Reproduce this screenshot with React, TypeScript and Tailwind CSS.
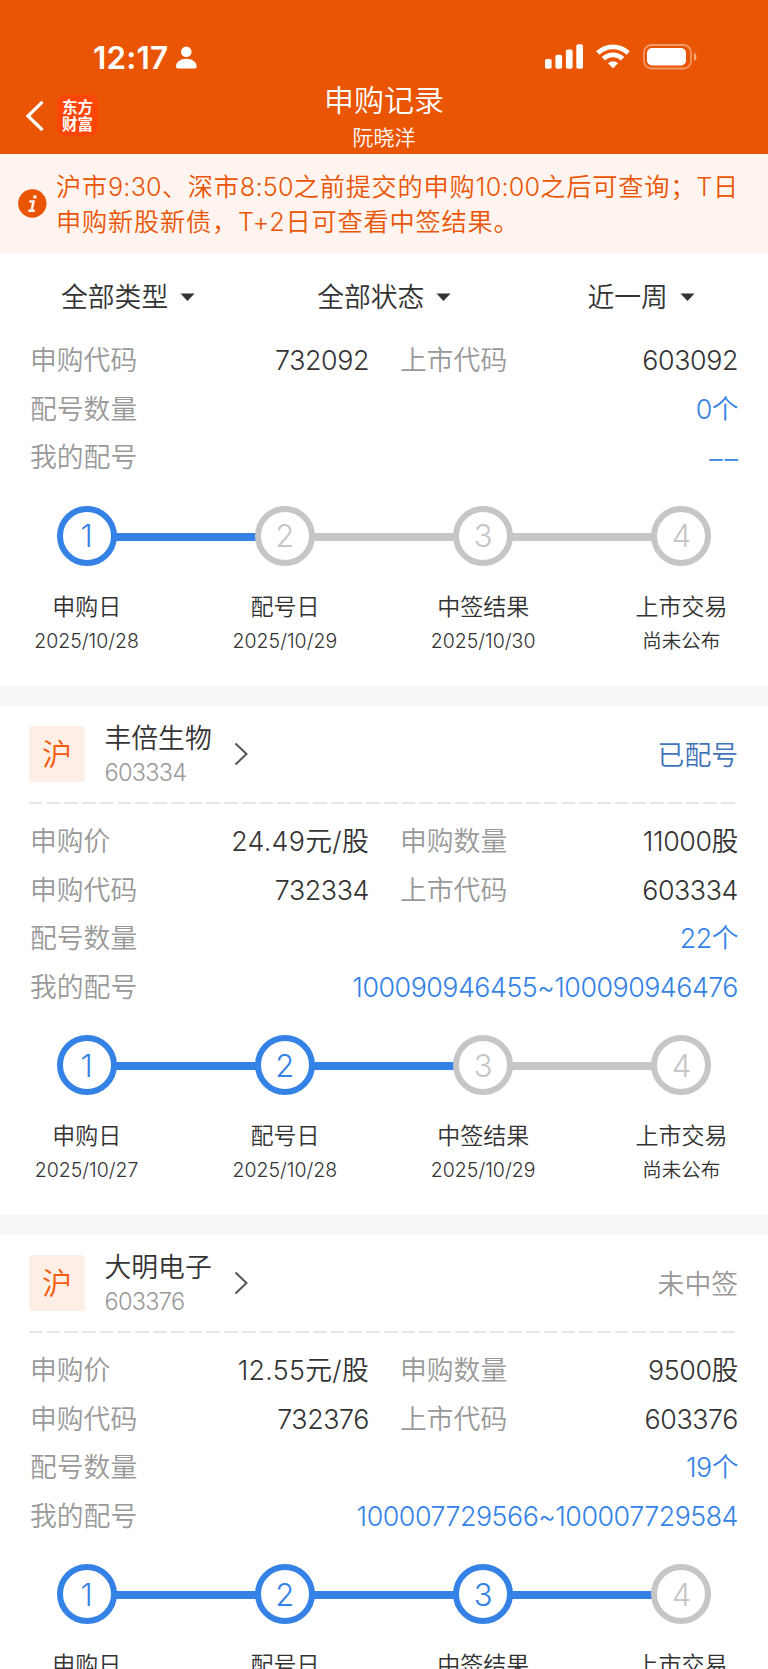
import type { ReactNode } from 'react'
import clsx from 'clsx'

type Step = { label: string; date: string }

type Field = { label: string; value: string }

type Subscription = {
  name?: string
  code?: string
  status?: string
  statusClass?: string
  pairs: Field[][]
  count: string
  numbers?: string
  done: number
  steps: Step[]
}

const records: Subscription[] = [
  {
    pairs: [
      [
        { label: '申购代码', value: '732092' },
        { label: '上市代码', value: '603092' },
      ],
    ],
    count: '0个',
    done: 1,
    steps: [
      { label: '申购日', date: '2025/10/28' },
      { label: '配号日', date: '2025/10/29' },
      { label: '中签结果', date: '2025/10/30' },
      { label: '上市交易', date: '尚未公布' },
    ],
  },
  {
    name: '丰倍生物',
    code: '603334',
    status: '已配号',
    statusClass: 'text-[#3f74b8]',
    pairs: [
      [
        { label: '申购价', value: '24.49元/股' },
        { label: '申购数量', value: '11000股' },
      ],
      [
        { label: '申购代码', value: '732334' },
        { label: '上市代码', value: '603334' },
      ],
    ],
    count: '22个',
    numbers: '100090946455~100090946476',
    done: 2,
    steps: [
      { label: '申购日', date: '2025/10/27' },
      { label: '配号日', date: '2025/10/28' },
      { label: '中签结果', date: '2025/10/29' },
      { label: '上市交易', date: '尚未公布' },
    ],
  },
  {
    name: '大明电子',
    code: '603376',
    status: '未中签',
    statusClass: 'text-[#999999]',
    pairs: [
      [
        { label: '申购价', value: '12.55元/股' },
        { label: '申购数量', value: '9500股' },
      ],
      [
        { label: '申购代码', value: '732376' },
        { label: '上市代码', value: '603376' },
      ],
    ],
    count: '19个',
    numbers: '100007729566~100007729584',
    done: 3,
    steps: [
      { label: '申购日', date: '2025/10/24' },
      { label: '配号日', date: '2025/10/27' },
      { label: '中签结果', date: '2025/10/28' },
      { label: '上市交易', date: '尚未公布' },
    ],
  },
]

function StatusBar() {
  return (
    <div className="flex h-[83px] items-start justify-between pl-[93px] pr-[71px] pt-[44px] text-white">
      <div className="flex items-start">
        <span className="w-[83px] text-[31.5px] font-semibold leading-[27px] tracking-[0.2px]">12:17</span>
        <svg className="mt-[2px] h-[23px] w-[21px]" viewBox="0 0 21 23" fill="currentColor">
          <circle cx="10.3" cy="5.7" r="5.3" />
          <path d="M0 20.5C0 16 4.5 12.8 10.3 12.8S20.6 16 20.6 20.5c0 1.2-.7 1.9-2 1.9H2c-1.3 0-2-.7-2-1.9Z" />
        </svg>
      </div>
      <div className="flex items-start">
        <svg className="h-[25px] w-[38px]" viewBox="0 0 38 25" fill="currentColor">
          <rect x="0" y="15" width="6.7" height="9.7" rx="1.8" />
          <rect x="10.4" y="10.8" width="6.7" height="13.9" rx="1.8" />
          <rect x="20.9" y="5.5" width="6.7" height="19.2" rx="1.8" />
          <rect x="31.3" y="0.3" width="6.7" height="24.4" rx="1.8" />
        </svg>
        <svg className="ml-[13px] h-[25px] w-[34px]" viewBox="0 0 34 25" fill="none" stroke="currentColor" strokeWidth="4.9">
          <path d="M1.8 9.1a21.6 21.6 0 0 1 30.4 0" />
          <path d="M7.5 14.8a13.5 13.5 0 0 1 19 0" />
          <path d="M17 24.3l-5-5a7.2 7.2 0 0 1 10 0z" fill="currentColor" stroke="none" />
        </svg>
        <svg className="ml-[13px] h-[26px] w-[54px]" viewBox="0 0 54 26">
          <rect x="1" y="1" width="47" height="23.5" rx="7.5" fill="none" stroke="white" strokeOpacity="0.4" strokeWidth="1.8" />
          <rect x="4" y="4" width="39" height="17.5" rx="5" fill="white" />
          <path d="M51 8.8c3.2 1.4 3.2 6.8 0 8.2z" fill="white" fillOpacity="0.5" />
        </svg>
      </div>
    </div>
  )
}

function Header() {
  return (
    <header className="h-[154px] bg-[#ea5504]">
      <StatusBar />
      <div className="grid grid-cols-3 text-white">
        <div className="flex items-start pl-[25px] pt-[12px]">
          <svg className="mt-[5px] h-[32px] w-[19px]" viewBox="0 0 19 32" fill="none" stroke="currentColor" strokeWidth="3.2">
            <path d="M17.5 1.8L3 16l14.5 14" />
          </svg>
          <div className="ml-[13px] flex h-[41px] w-[41px] flex-col items-center justify-center rounded-[8px] bg-[#ff4608] text-[15.5px] font-bold leading-[17px]">
            <span>东方</span>
            <span>财富</span>
          </div>
        </div>
        <div className="flex flex-col items-center">
          <h1 className="text-[30px] leading-[34px]">申购记录</h1>
          <p className="mt-[8.5px] text-[21px] leading-[24px]">阮晓洋</p>
        </div>
      </div>
    </header>
  )
}

function Time({ children }: { children: string }) {
  return <span className="tracking-[0.2px]">{children}</span>
}

function Notice() {
  return (
    <div className="flex h-[99px] items-center bg-[#fff4ef] pl-[18px] text-[#ea5504]">
      <svg className="-mt-px h-[29px] w-[29px] shrink-0" viewBox="0 0 29 29">
        <circle cx="14.3" cy="14.5" r="14.2" fill="currentColor" />
        <g fill="none" stroke="#fff4ef" strokeWidth="2.5">
          <path d="M11.3 12.6h4.2l-1.9 8.8M10.3 21.7h6.6" />
          <path d="M15.3 7.9h3.2" strokeWidth="3" />
        </g>
      </svg>
      <div className="ml-[9px] mt-[3px] whitespace-nowrap text-[25.2px] leading-[35px] tracking-[0.8px]">
        <p>
          沪市<Time>9:30</Time>、深市<Time>8:50</Time>之前提交的申购<Time>10:00</Time>之后可查询；T日
        </p>
        <p>申购新股新债，T+2日可查看中签结果。</p>
      </div>
    </div>
  )
}

function Filter({ label, className }: { label: string; className: string }) {
  return (
    <button className={clsx('flex items-center', className)}>
      <span>{label}</span>
      <svg className="ml-[12px] h-[8px] w-[15px]" viewBox="0 0 15 8" fill="currentColor">
        <path d="M0.5 0.5h14L7.5 8z" />
      </svg>
    </button>
  )
}

function Row({ children }: { children: ReactNode }) {
  return <div className="flex h-[48.5px] items-center justify-between">{children}</div>
}

function Cell({ label, value }: Field) {
  return (
    <div className="flex items-center justify-between">
      <span className="text-[#999999]">{label}</span>
      <span className={clsx('text-[#333333]', value.includes('/') ? 'tracking-[0.3px]' : 'tracking-[-0.4px]')}>
        {value}
      </span>
    </div>
  )
}

function Steps({ steps, done }: { steps: Step[]; done: number }) {
  return (
    <div className="mt-[24px]">
      <div className="flex items-center px-[26.5px]">
        {steps.map((step, i) => (
          <div key={step.label} className={clsx('flex items-center', i > 0 && 'flex-1')}>
            {i > 0 && (
              <div className={clsx('-mx-px mt-[2px] h-[8px] flex-1', i <= done ? 'bg-[#3482e5]' : 'bg-[#c6c6c6]')} />
            )}
            <div
              className={clsx(
                'flex h-[60px] w-[60px] items-center justify-center rounded-full border-[6px] text-[31px] leading-none',
                i < done ? 'border-[#3482e5] text-[#3482e5]' : 'border-[#c6c6c6] text-[#c6c6c6]',
              )}
            >
              {i + 1}
            </div>
          </div>
        ))}
      </div>
      <div className="-mx-[42.5px] mt-[24px] flex">
        {steps.map((step) => (
          <div key={step.label} className="flex flex-1 flex-col items-center text-[#333333]">
            <span className="text-[23px] leading-[34px]">{step.label}</span>
            <span className="text-[19.5px] leading-[34px]">{step.date}</span>
          </div>
        ))}
      </div>
    </div>
  )
}

function RecordCard({ record }: { record: Subscription }) {
  return (
    <section className="px-[30px] text-[26.8px] leading-[36px]">
      {record.name && (
        <>
          <div className="-ml-px flex h-[96px] items-center">
            <div className="flex h-[56px] w-[56px] items-center justify-center rounded-[4px] bg-[#fdeee6] text-[30px] text-[#f65b0c]">
              沪
            </div>
            <div className="ml-[19.5px] flex flex-col pt-[3px]">
              <span className="leading-[35px] text-[#333333]">{record.name}</span>
              <span className="text-[23.5px] leading-[34px] tracking-[-0.7px] text-[#999999]">{record.code}</span>
            </div>
            <svg className="ml-[22px] h-[24px] w-[15px]" viewBox="0 0 15 24" fill="none" stroke="#555555" strokeWidth="2">
              <path d="M1.5 1.5L12.5 12l-11 10.5" />
            </svg>
            <span className={clsx('ml-auto pt-px', record.statusClass)}>{record.status}</span>
          </div>
          <div className="-ml-px mb-[13px] h-[2px] w-[708px] bg-[repeating-linear-gradient(90deg,#e6e6e6_0_13.5px,transparent_13.5px_17.75px)]" />
        </>
      )}
      {record.pairs.map(([left, right]) => (
        <div key={left.label} className="grid h-[48.5px] grid-cols-[339px_338px] items-center gap-x-[31px]">
          <Cell {...left} />
          <Cell {...right} />
        </div>
      ))}
      <Row>
        <span className="text-[#999999]">配号数量</span>
        <span className="tracking-[-0.5px] text-[#3482e5]">{record.count}</span>
      </Row>
      <Row>
        <span className="text-[#999999]">我的配号</span>
        {record.numbers ? (
          <span className="tracking-[-0.48px] text-[#3482e5]">{record.numbers}</span>
        ) : (
          <span className="-mr-[2px] pt-[2px] tracking-[2px] text-[#3482e5]">––</span>
        )}
      </Row>
      <Steps steps={record.steps} done={record.done} />
    </section>
  )
}

export default function App() {
  return (
    <div className="h-[1669px] w-[768px] overflow-hidden bg-white font-['Inter','Noto_Sans_CJK_SC',sans-serif] font-[350]">
      <Header />
      <Notice />
      <div className="flex h-[83px] items-center pt-[5px] text-[26.8px] leading-[36px] text-[#333333]">
        <Filter label="全部类型" className="ml-[61px]" />
        <Filter label="全部状态" className="ml-[122px]" />
        <Filter label="近一周" className="ml-[136px]" />
      </div>
      {records.map((record, i) => (
        <div key={i}>
          {i > 0 && <div className="h-[20px] bg-[#f6f7f9]" />}
          <div className={clsx(i === 0 ? 'h-[350px]' : 'h-[509px]')}>
            <RecordCard record={record} />
          </div>
        </div>
      ))}
    </div>
  )
}
